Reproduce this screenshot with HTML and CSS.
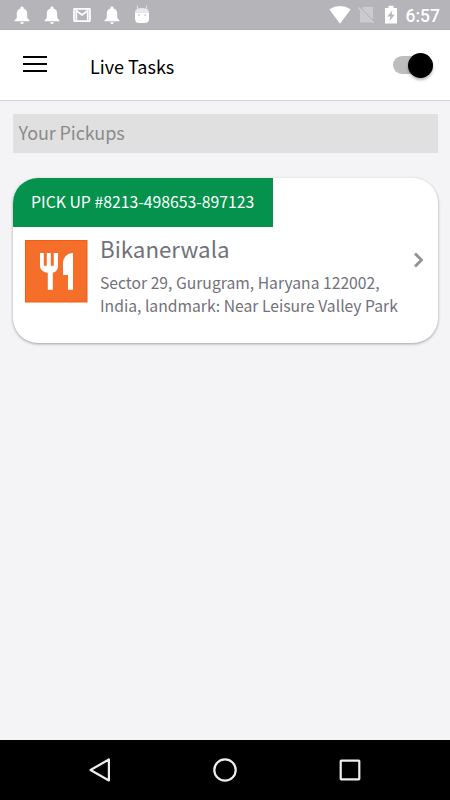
FILE: index.html
```html
<!DOCTYPE html>
<html lang="en">
<head>
  <meta charset="UTF-8">
  <meta name="viewport" content="width=device-width, initial-scale=1.0">
  <title>Live Tasks</title>
  <link rel="stylesheet" href="styles.css">
</head>
<body>
  <svg width="0" height="0" class="defs">
    <symbol id="bell" viewBox="0 0 20 20">
      <path d="M10 1.400c-.9 0-1.500.6-1.500 1.400v.6C6.100 4 4.800 6 4.800 8.500v4.400L2.600 15.200v1.100h14.800v-1.100l-2.200-2.300V8.500c0-2.500-1.300-4.500-3.700-5.100v-.6c0-.8-.6-1.400-1.500-1.400zM8.100 17.200a1.900 1.700 0 0 0 3.800 0z"/>
    </symbol>
  </svg>

  <div class="status-bar">
    <div class="notifications">
      <svg class="icon"><use href="#bell"/></svg>
      <svg class="icon"><use href="#bell"/></svg>
      <svg class="icon mail" viewBox="0 0 20 20">
        <rect x="2" y="3.800" width="16" height="12.400" rx=".6"/>
        <path d="M4.300 15.500V5.500L10 10l5.700-4.500v10"/>
      </svg>
      <svg class="icon"><use href="#bell"/></svg>
      <svg class="icon" viewBox="0 0 20 20">
        <path d="M3 7.500h14v6c0 3-1.500 4.600-4.500 4.600h-5C4.500 18.100 3 16.500 3 13.500z"/>
        <path d="M3 7.500c.1-1.800 1-3 2.500-3.700L4.500.8l.8-.3 1.200 2.900q3.500-1 7 0L14.700.5l.8.3-1 3c1.500.7 2.400 1.900 2.500 3.700z" opacity=".7"/>
        <circle class="eye" cx="6.900" cy="10" r=".8"/>
        <circle class="eye" cx="13.100" cy="10" r=".8"/>
      </svg>
    </div>
    <div class="system">
      <svg width="22" height="20" viewBox="0 0 22 20"><path d="M11 18.800.300 4.300Q11-2.500 21.700 4.300z"/></svg>
      <svg class="no-sim" width="18" height="20" viewBox="0 0 18 20">
        <path d="M6.500 2H16v13L5 3.500zM3 5.500l12 12H3z" opacity=".3"/>
        <path class="slash" d="M1.500 2.500l15 15.500"/>
      </svg>
      <svg class="battery" width="14" height="20" viewBox="0 0 14 20">
        <path d="M4.500.8h5v2.200H13v15.500H1V3h3.500z"/>
        <path class="bolt" d="M8.500 5.200 3.300 11.500h3.200l-1 4.800 5.200-6.700H7.500z"/>
      </svg>
      <span class="clock">6:57</span>
    </div>
  </div>

  <header class="toolbar">
    <div class="menu">
      <span></span>
      <span></span>
      <span></span>
    </div>
    <h1 class="title">Live Tasks</h1>
    <div class="toggle"><div class="knob"></div></div>
  </header>

  <main class="content">
    <div class="section-title">Your Pickups</div>

    <div class="card">
      <div class="tag">PICK UP #8213-498653-897123</div>
      <div class="item">
        <svg class="thumb" width="63" height="63" viewBox="0 0 63 63">
          <rect class="thumb-bg" x=".5" y=".5" width="61.500" height="61.500"/>
          <path d="M15 13h3.800v12.700h3V13h4v12.700h3V13H33v13.200c0 3.200-2 5.800-5.200 6.500v17.100h-5V32.700c-4.500-.7-7.800-3.300-7.800-6.500z"/>
          <path d="M48 13v36.800h-5V35h-5V23c0-5.500 4.500-10 10-10z"/>
        </svg>
        <div class="info">
          <h2 class="name">Bikanerwala</h2>
          <p class="address">Sector 29, Gurugram, Haryana 122002,<br>India, landmark: Near Leisure Valley Park</p>
        </div>
        <svg class="chevron" width="12" height="16" viewBox="0 0 12 16"><path d="M2 1.500 8.500 8 2 14.500"/></svg>
      </div>
    </div>
  </main>

  <nav class="nav-bar">
    <svg width="26" height="26" viewBox="0 0 26 26"><path d="M21.900 2.500v21L3.500 13z"/></svg>
    <svg width="26" height="26" viewBox="0 0 26 26"><circle cx="13" cy="13" r="10.700"/></svg>
    <svg width="26" height="26" viewBox="0 0 26 26"><rect x="3.700" y="3.700" width="18.600" height="18.600" rx=".5"/></svg>
  </nav>
</body>
</html>
```

FILE: styles.css
```css
* {
  box-sizing: border-box;
}

body {
  margin: 0;
  height: 800px;
  display: flex;
  flex-direction: column;
  background-color: #f4f4f7;
  font-family: "Noto Sans CJK SC", "Noto Sans", sans-serif;
  overflow: hidden;
}

h1, h2, p {
  margin: 0;
  font-weight: normal;
}

svg {
  display: block;
  flex: none;
}

.defs {
  position: absolute;
}

/* status bar */
.status-bar {
  height: 30px;
  flex: none;
  display: flex;
  justify-content: space-between;
  padding: 5px 10px 0 12px;
  background-color: #b5b4b9;
  border-bottom: 1px solid #aeadb1;
  fill: #fff;
}

.notifications {
  display: flex;
  gap: 10px;
}

.icon {
  width: 20px;
  height: 20px;
}

.mail {
  fill: none;
  stroke: #fff;
  stroke-width: 1.7;
}

.eye, .bolt {
  fill: #b5b4b9;
}

.system {
  display: flex;
}

.no-sim {
  margin-left: 6px;
}

.slash {
  stroke: #d3d2d6;
  stroke-width: 1.3;
}

.battery {
  margin-left: 9px;
}

.clock {
  margin-left: 8px;
  color: #fff;
  font: 500 17.5px/22px Roboto, sans-serif;
}

/* toolbar */
.toolbar {
  height: 71px;
  flex: none;
  display: flex;
  align-items: center;
  padding: 0 17px 0 23px;
  background-color: #fff;
  border-bottom: 1px solid #d2d2d4;
}

.menu {
  width: 24px;
  display: flex;
  flex-direction: column;
  gap: 5px;
  margin-bottom: 2px;
}

.menu span {
  height: 2px;
  background-color: #000;
}

.title {
  flex: 1;
  margin-left: 43px;
  padding-top: 1px;
  font-size: 18px;
  line-height: 26px;
  color: #000;
}

.toggle {
  width: 40px;
  height: 18px;
  display: flex;
  align-items: center;
  justify-content: flex-end;
  border-radius: 9px;
  background-color: #bdbdbd;
}

.knob {
  width: 25px;
  height: 25px;
  border-radius: 50%;
  background-color: #000;
  box-shadow: 0 2px 3px rgba(0, 0, 0, 0.3);
}

/* content */
.content {
  flex: 1;
  padding: 13px 12.5px 0;
}

.section-title {
  height: 38.5px;
  padding-left: 6px;
  background-color: #e0e0e0;
  color: #8b8b8b;
  font-size: 18px;
  letter-spacing: -0.1px;
  line-height: 36px;
}

.card {
  height: 165.5px;
  margin-top: 25px;
  overflow: hidden;
  background-color: #fff;
  border-radius: 25px;
  box-shadow: 0 1px 3px rgba(0, 0, 0, 0.35);
}

.tag {
  width: 260.5px;
  height: 49.5px;
  padding-left: 18.5px;
  background-color: #04924c;
  color: #fff;
  font-size: 15.8px;
  line-height: 48px;
  white-space: nowrap;
}

.item {
  display: flex;
  padding: 13px 12.5px 0;
}

.thumb {
  fill: #fff;
}

.thumb-bg {
  fill: #f56f2b;
  stroke: #f75c0e;
}

.info {
  flex: 1;
  margin-left: 12px;
  color: #72717a;
  white-space: nowrap;
}

.name {
  margin-top: -10px;
  font-size: 22.3px;
  line-height: 36px;
}

.address {
  margin-top: 6px;
  font-size: 15.7px;
  line-height: 22.5px;
}

.chevron {
  margin-top: 12px;
  fill: none;
  stroke: #929196;
  stroke-width: 2.8;
}

/* android navigation */
.nav-bar {
  height: 60px;
  flex: none;
  display: flex;
  align-items: center;
  justify-content: space-between;
  padding: 0 87px;
  background-color: #000;
  fill: none;
  stroke: #eee;
  stroke-width: 2.2;
  stroke-linejoin: round;
}
```
